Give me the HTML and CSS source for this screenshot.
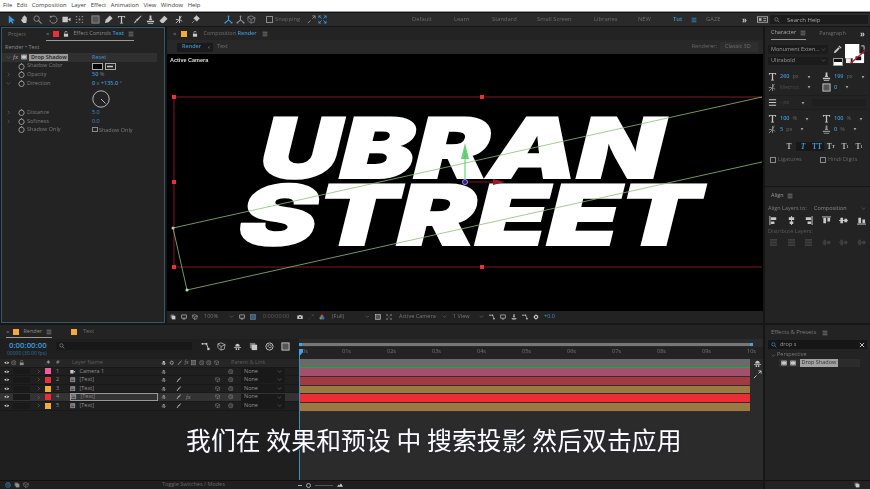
FILE: index.html
```html
<!DOCTYPE html>
<html lang="en">

<head>
    <meta charset="UTF-8">
    <title>After Effects - Urban Street</title>
    <link rel="stylesheet" href="styles.css">
</head>

<body>
    <svg class="sprite" width="0" height="0">
        <symbol id="i-arrow" viewBox="0 0 10 10"><path d="M2 0.5v9l2.4-2.3 1.6 2.6 1.3-.8-1.5-2.6 3-.3z" fill="currentColor"/></symbol>
        <symbol id="i-hand" viewBox="0 0 10 10"><path d="M2.5 5V2.5h1V1.5h1v-1h1v1h1v1h1v3l-.6 3.5H3.6L1 5.5l.8-.8z" fill="currentColor"/></symbol>
        <symbol id="i-zoom" viewBox="0 0 10 10"><circle cx="4" cy="4" r="3" fill="none" stroke="currentColor"/><path d="M6.2 6.2L9.5 9.5" stroke="currentColor" stroke-width="1.2"/></symbol>
        <symbol id="i-rotate" viewBox="0 0 10 10"><path d="M2 2.5A4 4 0 1 1 1 5.5" fill="none" stroke="currentColor"/><path d="M.5 .8L3.5 1 2 3.6z" fill="currentColor"/></symbol>
        <symbol id="i-camera" viewBox="0 0 10 10"><path d="M.5 2h6v6h-6zM7 4.5L9.5 3v4L7 5.5z" fill="currentColor"/></symbol>
        <symbol id="i-pan" viewBox="0 0 10 10"><path d="M1 1h1.500v1.500H1zM7.500 1H9v1.500H7.500zM1 7.500h1.500V9H1zM7.500 7.500H9V9H7.500zM4 4h2v2H4zM4.500 1h1v1h-1zM4.500 8h1v1h-1zM1 4.500h1v1H1zM8 4.500h1v1H8z" fill="currentColor"/></symbol>
        <symbol id="i-rect" viewBox="0 0 10 10"><rect x="1" y="1" width="8" height="8" fill="#555" stroke="currentColor"/></symbol>
        <symbol id="i-pen" viewBox="0 0 10 10"><path d="M6.500 .5L9.500 3.500 5 8 1 9l1-4z" fill="currentColor"/></symbol>
        <symbol id="i-type" viewBox="0 0 10 10"><path d="M1 1h8v2H8V2H5.700v6.500h1v1H3.300v-1h1V2H2v1H1z" fill="currentColor"/></symbol>
        <symbol id="i-brush" viewBox="0 0 10 10"><path d="M9 .5l.5.5L4.500 7 3 5.500zM2.500 6L4 7.500 1 9.500z" fill="currentColor"/></symbol>
        <symbol id="i-stamp" viewBox="0 0 10 10"><path d="M4 .5h2v3.500l1 1.500H3L4 4zM1 6.500h8v1.500H1zM2 9h6v.8H2z" fill="currentColor"/></symbol>
        <symbol id="i-eraser" viewBox="0 0 10 10"><path d="M6 .8L9.500 4.300 5 9H3L.5 6.300z" fill="currentColor"/></symbol>
        <symbol id="i-roto" viewBox="0 0 10 10"><path d="M1 9L5 5M5 1v8M1 5h3M7 1L5 5l3 2" fill="none" stroke="currentColor"/></symbol>
        <symbol id="i-pin" viewBox="0 0 10 10"><path d="M6 .5L9.500 4 8.300 4.700 6.500 7 3 3.500 5.300 1.700zM3.800 6.200L1 9" fill="currentColor" stroke="currentColor" stroke-width=".6"/></symbol>
        <symbol id="i-axis" viewBox="0 0 10 10"><path d="M5 1v4.500L1.500 8.500M5 5.500l3.500 3" fill="none" stroke="currentColor" stroke-width="1.200"/><circle cx="5" cy="1.500" r="1" fill="currentColor"/><circle cx="1.500" cy="8.500" r="1" fill="currentColor"/><circle cx="8.500" cy="8.500" r="1" fill="currentColor"/></symbol>
        <symbol id="i-box3d" viewBox="0 0 10 10"><path d="M1 2l3.500-1 4.500 2-1 5-4 1-3-3zM4.500 5L9 3M4.500 5L1 2M4.500 5v4" fill="none" stroke="currentColor" stroke-width=".8"/></symbol>
        <symbol id="i-snap" viewBox="0 0 10 10"><path d="M1 9l3-3M6 1h3v3M9 1L6 4" fill="none" stroke="currentColor"/></symbol>
        <symbol id="i-grid" viewBox="0 0 10 10"><path d="M1 1l3 3M9 1L6 4M1 9l3-3M9 9L6 6M3.500 1H1v2.500M6.500 1H9v2.500M3.500 9H1V6.500M6.500 9H9V6.500" fill="none" stroke="currentColor" stroke-width=".9"/></symbol>
        <symbol id="i-stopwatch" viewBox="0 0 10 10"><circle cx="5" cy="5.500" r="3.800" fill="none" stroke="currentColor" stroke-width="1.100"/><path d="M4 .5h2" stroke="currentColor" stroke-width="1.100"/></symbol>
        <symbol id="i-twirl" viewBox="0 0 10 10"><path d="M3.500 1.500L7 5 3.500 8.500" fill="none" stroke="currentColor"/></symbol>
        <symbol id="i-down" viewBox="0 0 10 10"><path d="M1.500 3L5 6.800 8.500 3" fill="none" stroke="currentColor"/></symbol>
        <symbol id="i-tri" viewBox="0 0 10 10"><path d="M1.500 2.500h7L5 8.500z" fill="currentColor"/></symbol>
        <symbol id="i-menu" viewBox="0 0 10 10"><path d="M1 2h8M1 5h8M1 8h8" stroke="currentColor" stroke-width="1.200"/></symbol>
        <symbol id="i-lock" viewBox="0 0 10 10"><path d="M1.500 4.500h7v5h-7z" fill="currentColor"/><path d="M3 4.500V2.500a2 2 0 0 1 4 0" fill="none" stroke="currentColor" stroke-width="1.100"/></symbol>
        <symbol id="i-eye" viewBox="0 0 10 10"><path d="M.5 5C2 2.500 8 2.500 9.500 5 8 7.500 2 7.500.5 5z" fill="currentColor"/><circle cx="5" cy="5" r="1.300" fill="#222"/></symbol>
        <symbol id="i-shy" viewBox="0 0 10 10"><path d="M2.500 5C2.500 1 7.500 1 7.500 5zM1 5.500h8v1H1zM3 7h1.500v2H3zM5.500 7H7v2H5.500z" fill="currentColor"/></symbol>
        <symbol id="i-swirl" viewBox="0 0 10 10"><circle cx="5" cy="5" r="4" fill="none" stroke="currentColor"/><path d="M3 5a2 2 0 0 1 4 0 1.500 1.500 0 0 1-3 0" fill="none" stroke="currentColor" stroke-width=".8"/></symbol>
        <symbol id="i-layer" viewBox="0 0 10 10"><rect x=".5" y=".5" width="9" height="9" fill="#9a9a9a"/><rect x="2" y="2" width="3" height="3" fill="#c24a4a"/><rect x="5" y="2" width="3" height="3" fill="#4a7ec2"/><rect x="2" y="5" width="6" height="3" fill="#4f4f58"/></symbol>
        <symbol id="i-film" viewBox="0 0 10 10"><path d="M.5 1h9v8h-9z" fill="currentColor"/><path d="M2 2.500h1M4.500 2.500h1M7 2.500h1M2 7.500h1M4.500 7.500h1M7 7.500h1" stroke="#222"/></symbol>
        <symbol id="i-search" viewBox="0 0 10 10"><circle cx="4" cy="4" r="2.800" fill="none" stroke="currentColor"/><path d="M6 6l3 3" stroke="currentColor" stroke-width="1.100"/></symbol>
        <symbol id="i-close" viewBox="0 0 10 10"><path d="M1.500 1.500l7 7M8.500 1.500l-7 7" stroke="currentColor" stroke-width="1.600"/></symbol>
        <symbol id="i-dropper" viewBox="0 0 10 10"><path d="M1 9l.5-2L6 2.500 7.500 4 3 8.500zM6 1.500l1-1 2.500 2.500-1 1z" fill="currentColor"/></symbol>
        <symbol id="i-screen" viewBox="0 0 10 10"><path d="M1 1.500h8v5.500H1zM3 8.500h4" fill="none" stroke="currentColor" stroke-width="1.100"/></symbol>
        <symbol id="i-cam-still" viewBox="0 0 10 10"><path d="M.5 2.500h2.500L4 1.500h2l1 1h2.500v6H.5z" fill="currentColor"/><circle cx="5" cy="5.500" r="1.500" fill="#222"/></symbol>
        <symbol id="i-rgb" viewBox="0 0 10 10"><circle cx="5" cy="3.200" r="2.500" fill="#e23b3b"/><circle cx="3.200" cy="6.500" r="2.500" fill="#3bb04a"/><circle cx="6.800" cy="6.500" r="2.500" fill="#3b62e2"/></symbol>
        <symbol id="i-gear" viewBox="0 0 10 10"><circle cx="5" cy="5" r="2.700" fill="none" stroke="currentColor" stroke-width="1.800"/><path d="M5 .5v2M5 7.500v2M.5 5h2M7.500 5h2" stroke="currentColor"/></symbol>
        <symbol id="i-flow" viewBox="0 0 10 10"><path d="M1 2h5M6 2l2 5" stroke="currentColor"/><circle cx="1.500" cy="2" r="1" fill="currentColor"/><rect x="5" y="1" width="2" height="2" fill="currentColor"/><rect x="7" y="6.500" width="2.500" height="2.500" fill="currentColor"/></symbol>
        <symbol id="i-tile" viewBox="0 0 10 10"><path d="M1 1h6v6H1z" fill="#777"/><path d="M3 3h6v6H3z" fill="currentColor"/></symbol>
        <symbol id="i-align-l" viewBox="0 0 10 10"><path d="M1 0v10" stroke="currentColor"/><path d="M2 1.500h6v3H2zM2 6h4v3H2z" fill="currentColor"/></symbol>
        <symbol id="i-align-c" viewBox="0 0 10 10"><path d="M5 0v10" stroke="currentColor"/><path d="M2 1.500h6v3H2zM3 6h4v3H3z" fill="currentColor"/></symbol>
        <symbol id="i-align-r" viewBox="0 0 10 10"><path d="M9 0v10" stroke="currentColor"/><path d="M2 1.500h6v3H2zM4 6h4v3H4z" fill="currentColor"/></symbol>
        <symbol id="i-align-t" viewBox="0 0 10 10"><path d="M0 1h10" stroke="currentColor"/><path d="M1.500 2h3v6h-3zM6 2h3v4H6z" fill="currentColor"/></symbol>
        <symbol id="i-align-m" viewBox="0 0 10 10"><path d="M0 5h10" stroke="currentColor"/><path d="M1.500 2h3v6h-3zM6 3h3v4H6z" fill="currentColor"/></symbol>
        <symbol id="i-align-b" viewBox="0 0 10 10"><path d="M0 9h10" stroke="currentColor"/><path d="M1.500 2h3v6h-3zM6 4h3v4H6z" fill="currentColor"/></symbol>
        <symbol id="i-bars" viewBox="0 0 10 10"><path d="M1 1h8v2H1zM1 4h8v2H1zM1 7h8v2H1z" fill="currentColor"/></symbol>
        <symbol id="i-mountain" viewBox="0 0 10 10"><path d="M0 8l3-4 1.500 2L6.500 2 10 8z" fill="currentColor"/></symbol>
    </svg>

    <div class="app">
        <nav class="menubar">
            <span>File</span><span>Edit</span><span>Composition</span><span>Layer</span><span>Effect</span><span>Animation</span><span>View</span><span>Window</span><span>Help</span>
        </nav>

        <div class="toolbar">
            <div class="tools">
                <svg class="ic ic-blue"><use href="#i-arrow"/></svg>
                <svg class="ic ic-light"><use href="#i-hand"/></svg>
                <svg class="ic"><use href="#i-zoom"/></svg>
                <svg class="ic group"><use href="#i-rotate"/></svg>
                <svg class="ic ic-light"><use href="#i-camera"/></svg>
                <svg class="ic"><use href="#i-pan"/></svg>
                <svg class="ic group"><use href="#i-rect"/></svg>
                <svg class="ic ic-light"><use href="#i-pen"/></svg>
                <svg class="ic ic-light"><use href="#i-type"/></svg>
                <svg class="ic ic-light group"><use href="#i-brush"/></svg>
                <svg class="ic ic-light"><use href="#i-stamp"/></svg>
                <svg class="ic ic-light"><use href="#i-eraser"/></svg>
                <svg class="ic ic-light group"><use href="#i-roto"/></svg>
                <svg class="ic ic-light group"><use href="#i-pin"/></svg>
            </div>
            <div class="axis-tools">
                <svg class="ic ic-blue"><use href="#i-axis"/></svg>
                <svg class="ic"><use href="#i-axis"/></svg>
                <svg class="ic"><use href="#i-box3d"/></svg>
                <span class="check snapbox"></span><span class="snap-label">Snapping</span>
                <svg class="ic"><use href="#i-snap"/></svg>
                <svg class="ic ic-blue"><use href="#i-grid"/></svg>
            </div>
            <div class="workspaces">
                <span class="ws-default">Default</span><span class="ws-learn">Learn</span><span class="ws-standard">Standard</span><span class="ws-small">Small Screen</span><span class="ws-lib">Libraries</span><span class="ws-new">NEW</span><span class="ws-tut">Tut</span>
                <svg class="ic-mini ic-blue"><use href="#i-menu"/></svg>
                <span class="ws-gaze">GAZE</span>
                <span class="more">»</span>
                <svg class="sync" viewBox="0 0 12 7"><rect x=".5" y=".5" width="11" height="6" fill="none" stroke="#aaa"/><rect x="2" y="2" width="3" height="3" fill="#aaa"/><path d="M7 2.500h3M7 4.500h3" stroke="#aaa"/></svg>
            </div>
            <div class="searchhelp">
                <svg class="ic-mini"><use href="#i-search"/></svg>
                <span>Search Help</span>
            </div>
        </div>

        <main class="workspace">
            <section class="panel fx-controls">
                <header class="tabs">
                    <span class="tab-dim tab-project">Project</span>
                    <span class="active-tab">
                        <span class="x">×</span><i class="chip chip-red"></i>
                        <svg class="ic-mini ic-light"><use href="#i-lock"/></svg>
                        <span>Effect Controls <b class="blue">Text</b></span>
                        <svg class="ic-mini"><use href="#i-menu"/></svg>
                    </span>
                </header>
                <div class="fx-crumb">Render • Text</div>
                <div class="fx-row fx-title">
                    <svg class="tw"><use href="#i-down"/></svg>
                    <em class="fx-mark">fx</em>
                    <svg class="ic-mini ic-light"><use href="#i-film"/></svg>
                    <span class="fx-name">Drop Shadow</span>
                    <span class="blue fx-val">Reset</span>
                </div>
                <div class="fx-row">
                    <span class="tw"></span>
                    <svg class="watch"><use href="#i-stopwatch"/></svg>
                    <span class="fx-label">Shadow Color</span>
                    <span class="fx-val swatches"><i class="swatch-black"></i><svg class="swatch-drop" viewBox="0 0 11 7"><rect x=".5" y=".5" width="10" height="6" fill="none" stroke="#aaa"/><path d="M2 3.500h6" stroke="#ccc" stroke-width="1.500"/></svg></span>
                </div>
                <div class="fx-row">
                    <svg class="tw"><use href="#i-twirl"/></svg>
                    <svg class="watch"><use href="#i-stopwatch"/></svg>
                    <span class="fx-label">Opacity</span>
                    <span class="fx-val"><b class="blue">50</b> %</span>
                </div>
                <div class="fx-row">
                    <svg class="tw"><use href="#i-down"/></svg>
                    <svg class="watch"><use href="#i-stopwatch"/></svg>
                    <span class="fx-label">Direction</span>
                    <span class="fx-val"><b class="blue">0</b> x <b class="blue">+135.0</b> °</span>
                </div>
                <div class="dial-wrap">
                    <svg class="dial" viewBox="0 0 18 18"><circle cx="9" cy="9" r="8.200" fill="none" stroke="#b5b5b5"/><path d="M9 9l4.500 4.500" stroke="#b5b5b5"/></svg>
                </div>
                <div class="fx-row">
                    <svg class="tw"><use href="#i-twirl"/></svg>
                    <svg class="watch"><use href="#i-stopwatch"/></svg>
                    <span class="fx-label">Distance</span>
                    <span class="fx-val blue">5.0</span>
                </div>
                <div class="fx-row">
                    <svg class="tw"><use href="#i-twirl"/></svg>
                    <svg class="watch"><use href="#i-stopwatch"/></svg>
                    <span class="fx-label">Softness</span>
                    <span class="fx-val blue">0.0</span>
                </div>
                <div class="fx-row">
                    <span class="tw"></span>
                    <svg class="watch"><use href="#i-stopwatch"/></svg>
                    <span class="fx-label">Shadow Only</span>
                    <span class="fx-val"><i class="check"></i> Shadow Only</span>
                </div>
            </section>

            <section class="panel comp">
                <header class="tabs comp-tabs">
                    <span class="x">×</span><i class="chip chip-orange"></i>
                    <svg class="ic-mini ic-light"><use href="#i-lock"/></svg>
                    <span class="tab-dim">Composition <b class="blue">Render</b></span>
                    <svg class="ic-mini"><use href="#i-menu"/></svg>
                </header>
                <div class="comp-sub">
                    <span class="pill"><b class="blue">Render</b><b class="blue pill-arrow">‹</b></span>
                    <span class="tab-dim">Text</span>
                    <span class="renderer">Renderer:</span>
                    <span class="renderer-box">Classic 3D</span>
                </div>
                <div class="viewer">
                    <div class="viewer-label">Active Camera</div>
                    <div class="title-art">
                        <div class="line-1">UBRAN</div>
                        <div class="line-2">STREET</div>
                    </div>
                    <svg class="overlay" viewBox="0 0 595 257">
                        <path d="M7 43H595M7 213H595M7 43V213" fill="none" stroke="#7d1c26"/>
                        <g fill="#ea2f3c">
                            <rect x="5" y="41" width="4" height="4"/><rect x="313" y="41" width="4" height="4"/><rect x="5" y="126" width="4" height="4"/><rect x="5" y="211" width="4" height="4"/><rect x="313" y="211" width="4" height="4"/>
                        </g>
                        <path d="M6 174L595 43M6 174L20 236L595 108" fill="none" stroke="#8bbd7c" stroke-width=".8"/>
                        <circle cx="6" cy="174" r="1.500" fill="#a8d890"/><circle cx="20" cy="236" r="1.600" fill="#a8e890"/>
                        <path d="M298 128V96" stroke="#4fcf5a"/>
                        <path d="M298 89L302 105H294z" fill="#56c864" opacity=".85"/>
                        <path d="M298 128H330" stroke="#8a1020"/>
                        <path d="M338 128L326 125V131z" fill="#a3162a"/>
                        <circle cx="298" cy="128" r="2.500" fill="#2a1a8a" stroke="#a98ae8"/>
                    </svg>
                </div>
                <div class="viewer-bar">
                    <svg class="ic-mini ic-light"><use href="#i-tile"/></svg>
                    <svg class="ic-mini ic-light"><use href="#i-screen"/></svg>
                    <svg class="ic-mini ic-light"><use href="#i-box3d"/></svg>
                    <span class="vb-zoom">100%</span><svg class="tw"><use href="#i-down"/></svg>
                    <svg class="ic-mini ic-light"><use href="#i-screen"/></svg>
                    <svg class="ic-mini ic-blue"><use href="#i-rect"/></svg>
                    <span class="vb-time">0:00:00:00</span>
                    <svg class="ic-mini ic-light"><use href="#i-cam-still"/></svg>
                    <svg class="ic-mini ic-dim"><use href="#i-snap"/></svg>
                    <svg class="ic-mini"><use href="#i-rgb"/></svg>
                    <span class="vb-full">(Full)</span><svg class="tw"><use href="#i-down"/></svg>
                    <svg class="ic-mini ic-light"><use href="#i-rect"/></svg>
                    <svg class="ic-mini"><use href="#i-grid"/></svg>
                    <span class="vb-cam">Active Camera</span><svg class="tw"><use href="#i-down"/></svg>
                    <span class="vb-view">1 View</span><svg class="tw"><use href="#i-down"/></svg>
                    <svg class="ic-mini ic-light"><use href="#i-flow"/></svg>
                    <svg class="ic-mini ic-light"><use href="#i-screen"/></svg>
                    <svg class="ic-mini ic-light"><use href="#i-stamp"/></svg>
                    <svg class="ic-mini ic-light"><use href="#i-flow"/></svg>
                    <svg class="ic-mini ic-light"><use href="#i-gear"/></svg>
                    <span class="blue">+0.0</span>
                </div>
            </section>

            <aside class="side-top">
                <section class="panel character">
                    <header class="side-tabs">
                        <span class="underlined">Character <svg class="ic-mini"><use href="#i-menu"/></svg></span>
                        <span class="tab-dim para">Paragraph</span>
                        <span class="more">»</span>
                    </header>
                    <div class="font-block">
                        <div class="font-selects">
                            <div class="select">Monument Exten...<svg class="tw"><use href="#i-down"/></svg></div>
                            <div class="select">Ultrabold<svg class="tw"><use href="#i-down"/></svg></div>
                        </div>
                        <div class="small-swatches">
                            <svg class="ic ic-light"><use href="#i-dropper"/></svg>
                            <i class="bw-swatch"></i>
                        </div>
                        <svg class="color-swatch" viewBox="0 0 22 21">
                            <rect x="0" y="0" width="15" height="15" fill="#fff"/>
                            <rect x="1" y="15" width="5" height="5" fill="#eee"/>
                            <rect x="8" y="10" width="12" height="10" fill="#fff"/>
                            <rect x="11" y="13" width="6" height="4" fill="#111"/>
                            <path d="M5 21L21 7" stroke="#c2142c" stroke-width="1.300"/>
                            <path d="M17 2h3v4" fill="none" stroke="#ccc"/>
                        </svg>
                    </div>
                    <div class="char-grid">
                        <span class="cg"><svg class="ic ic-light"><use href="#i-type"/></svg><b class="blue">260</b> px <svg class="tw-tri"><use href="#i-tri"/></svg></span>
                        <span class="cg"><svg class="ic ic-light"><use href="#i-stamp"/></svg><b class="blue">199</b> px <svg class="tw-tri"><use href="#i-tri"/></svg></span>
                        <span class="cg"><svg class="ic"><use href="#i-roto"/></svg><span class="ic-dim">Metrics</span> <svg class="tw-tri"><use href="#i-tri"/></svg></span>
                        <span class="cg"><svg class="ic ic-light"><use href="#i-rect"/></svg><b class="blue">0</b> <svg class="tw-tri"><use href="#i-tri"/></svg></span>
                    </div>
                    <div class="stroke-row">
                        <svg class="ic ic-light"><use href="#i-menu"/></svg><span class="ic-dim">- px</span><svg class="tw-tri"><use href="#i-tri"/></svg>
                        <span class="stroke-select"></span>
                    </div>
                    <div class="char-grid scale-grid">
                        <span class="cg"><svg class="ic ic-light"><use href="#i-type"/></svg><b class="blue">100</b> % <svg class="tw-tri"><use href="#i-tri"/></svg></span>
                        <span class="cg"><svg class="ic ic-light"><use href="#i-type"/></svg><b class="blue">100</b> % <svg class="tw-tri"><use href="#i-tri"/></svg></span>
                        <span class="cg"><svg class="ic"><use href="#i-roto"/></svg><b class="blue">5</b> px <svg class="tw-tri"><use href="#i-tri"/></svg></span>
                        <span class="cg"><svg class="ic"><use href="#i-stamp"/></svg><b class="blue">0</b> % <svg class="tw-tri"><use href="#i-tri"/></svg></span>
                    </div>
                    <div class="type-styles">
                        <span>T</span><span class="on"><em>T</em></span><span class="on">TT</span><span>T<small>T</small></span><span>T<sup>1</sup></span><span>T<sub>1</sub></span>
                    </div>
                    <div class="char-checks">
                        <span><i class="check"></i>Ligatures</span>
                        <span><i class="check"></i>Hindi Digits</span>
                    </div>
                </section>
                <section class="panel align">
                    <header class="align-title">Align <svg class="ic-mini"><use href="#i-menu"/></svg></header>
                    <div class="align-to"><span>Align Layers to:</span><span class="align-select">Composition<svg class="tw"><use href="#i-down"/></svg></span></div>
                    <div class="align-icons">
                        <svg class="ic ic-light"><use href="#i-align-l"/></svg><svg class="ic ic-light"><use href="#i-align-c"/></svg><svg class="ic ic-light"><use href="#i-align-r"/></svg><svg class="ic ic-light"><use href="#i-align-t"/></svg><svg class="ic ic-light"><use href="#i-align-m"/></svg><svg class="ic ic-light"><use href="#i-align-b"/></svg>
                    </div>
                    <div class="align-dist">Distribute Layers:</div>
                    <div class="align-icons faint">
                        <svg class="ic"><use href="#i-bars"/></svg><svg class="ic"><use href="#i-bars"/></svg><svg class="ic"><use href="#i-bars"/></svg><svg class="ic"><use href="#i-align-m"/></svg><svg class="ic"><use href="#i-align-m"/></svg><svg class="ic"><use href="#i-align-m"/></svg>
                    </div>
                </section>
            </aside>

            <section class="panel timeline">
                <header class="tl-tabs">
                    <span class="active-tab">
                        <span class="x">×</span><i class="chip chip-orange"></i><span>Render</span>
                        <svg class="ic-mini"><use href="#i-menu"/></svg>
                    </span>
                    <i class="chip chip-orange chip-second"></i><span class="tab-dim">Text</span>
                </header>
                <div class="tl-body">
                    <div class="tl-left">
                        <div class="tl-controls">
                            <div class="tl-time">
                                <div class="timecode">0:00:00:00</div>
                                <div class="fps">00000 (30.00 fps)</div>
                            </div>
                            <div class="tl-search"><svg class="ic-mini"><use href="#i-search"/></svg></div>
                            <div class="tl-tools">
                                <svg class="ic ic-light"><use href="#i-flow"/></svg><svg class="ic ic-light"><use href="#i-box3d"/></svg><svg class="ic ic-light"><use href="#i-shy"/></svg><svg class="ic ic-light"><use href="#i-tile"/></svg><svg class="ic ic-light"><use href="#i-swirl"/></svg><svg class="ic ic-light"><use href="#i-rect"/></svg>
                            </div>
                        </div>
                        <div class="layer-row layer-head">
                            <svg class="ic-mini ic-light"><use href="#i-eye"/></svg>
                            <span class="solo-head"><svg class="ic-mini"><use href="#i-swirl"/></svg><svg class="ic-mini"><use href="#i-lock"/></svg></span>
                            <span></span>
                            <svg class="ic-mini"><use href="#i-pin"/></svg>
                            <span class="num">#</span>
                            <span class="name dim">Layer Name</span>
                            <svg class="ic-mini ic-light"><use href="#i-shy"/></svg>
                            <span class="sw-head">
                                <svg class="ic-mini"><use href="#i-gear"/></svg><svg class="ic-mini"><use href="#i-brush"/></svg><em>fx</em><svg class="ic-mini"><use href="#i-rect"/></svg><svg class="ic-mini"><use href="#i-swirl"/></svg><svg class="ic-mini"><use href="#i-swirl"/></svg><svg class="ic-mini"><use href="#i-box3d"/></svg>
                            </span>
                            <span class="parent dim">Parent &amp; Link</span>
                        </div>
                        <div class="layer-row">
                            <svg class="ic-mini ic-light"><use href="#i-eye"/></svg><span class="cells"></span>
                            <svg class="tw"><use href="#i-twirl"/></svg><i class="chip chip-pink"></i><span class="num">1</span>
                            <span class="name"><svg class="ic-mini ic-light"><use href="#i-camera"/></svg>Camera 1</span>
                            <svg class="ic-mini"><use href="#i-shy"/></svg>
                            <span class="sw"></span><span class="sw"></span><span class="sw"></span>
                            <svg class="ic-mini"><use href="#i-swirl"/></svg>
                            <span class="none">None<svg class="tw"><use href="#i-down"/></svg></span>
                        </div>
                        <div class="layer-row">
                            <svg class="ic-mini ic-light"><use href="#i-eye"/></svg><span class="cells"></span>
                            <svg class="tw"><use href="#i-twirl"/></svg><i class="chip chip-red"></i><span class="num">2</span>
                            <span class="name"><svg class="ic-mini"><use href="#i-layer"/></svg>[Text]</span>
                            <svg class="ic-mini"><use href="#i-shy"/></svg>
                            <span class="sw"><svg class="ic-mini ic-light"><use href="#i-brush"/></svg></span><span class="sw"></span><span class="sw sw-3d"><svg class="ic-mini"><use href="#i-box3d"/></svg></span>
                            <svg class="ic-mini"><use href="#i-swirl"/></svg>
                            <span class="none">None<svg class="tw"><use href="#i-down"/></svg></span>
                        </div>
                        <div class="layer-row">
                            <svg class="ic-mini ic-light"><use href="#i-eye"/></svg><span class="cells"></span>
                            <svg class="tw"><use href="#i-twirl"/></svg><i class="chip chip-orange"></i><span class="num">3</span>
                            <span class="name"><svg class="ic-mini"><use href="#i-layer"/></svg>[Text]</span>
                            <svg class="ic-mini"><use href="#i-shy"/></svg>
                            <span class="sw"><svg class="ic-mini ic-light"><use href="#i-brush"/></svg></span><span class="sw"></span><span class="sw sw-3d"><svg class="ic-mini"><use href="#i-box3d"/></svg></span>
                            <svg class="ic-mini"><use href="#i-swirl"/></svg>
                            <span class="none">None<svg class="tw"><use href="#i-down"/></svg></span>
                        </div>
                        <div class="layer-row selected">
                            <svg class="ic-mini ic-light"><use href="#i-eye"/></svg><span class="cells"></span>
                            <svg class="tw"><use href="#i-twirl"/></svg><i class="chip chip-red"></i><span class="num">4</span>
                            <span class="name name-edit"><svg class="ic-mini"><use href="#i-layer"/></svg>[Text]</span>
                            <svg class="ic-mini"><use href="#i-shy"/></svg>
                            <span class="sw"><svg class="ic-mini ic-light"><use href="#i-brush"/></svg></span><span class="sw fx-sw"><em>fx</em></span><span class="sw sw-3d"><svg class="ic-mini"><use href="#i-box3d"/></svg></span>
                            <svg class="ic-mini"><use href="#i-swirl"/></svg>
                            <span class="none">None<svg class="tw"><use href="#i-down"/></svg></span>
                        </div>
                        <div class="layer-row">
                            <svg class="ic-mini ic-light"><use href="#i-eye"/></svg><span class="cells"></span>
                            <svg class="tw"><use href="#i-twirl"/></svg><i class="chip chip-orange"></i><span class="num">5</span>
                            <span class="name"><svg class="ic-mini"><use href="#i-layer"/></svg>[Text]</span>
                            <svg class="ic-mini"><use href="#i-shy"/></svg>
                            <span class="sw"><svg class="ic-mini ic-light"><use href="#i-brush"/></svg></span><span class="sw"></span><span class="sw sw-3d"><svg class="ic-mini"><use href="#i-box3d"/></svg></span>
                            <svg class="ic-mini"><use href="#i-swirl"/></svg>
                            <span class="none">None<svg class="tw"><use href="#i-down"/></svg></span>
                        </div>
                    </div>
                    <div class="tl-right">
                        <div class="nav-bar"></div>
                        <div class="ruler">
                            <span>0s</span><span>01s</span><span>02s</span><span>03s</span><span>04s</span><span>05s</span><span>06s</span><span>07s</span><span>08s</span><span>09s</span><span>10s</span>
                        </div>
                        <div class="work-area"></div>
                        <div class="tracks">
                            <div class="track track-pink"></div>
                            <div class="track track-red"></div>
                            <div class="track track-tan"></div>
                            <div class="track track-hot"></div>
                            <div class="track track-tan"></div>
                        </div>
                        <div class="playhead"></div>
                        <svg class="head-cap" viewBox="0 0 7 7"><path d="M0 0h7v3L3.500 7 0 3z" fill="#3ba8ee"/></svg>
                        <div class="side-marks">
                            <svg class="ic ic-light"><use href="#i-shy"/></svg>
                            <svg class="ic ic-light"><use href="#i-snap"/></svg>
                        </div>
                    </div>
                </div>
                <footer class="tl-foot">
                    <span class="foot-icons"><svg class="ic-mini ic-blue"><use href="#i-swirl"/></svg><svg class="ic-mini"><use href="#i-tile"/></svg><svg class="ic-mini"><use href="#i-box3d"/></svg></span>
                    <span class="toggle">Toggle Switches / Modes</span>
                    <span class="foot-zoom"><i class="zoom-min"></i><i class="zoom-knob"></i><i class="zoom-line"></i><svg class="ic-mini ic-light"><use href="#i-mountain"/></svg></span>
                </footer>
            </section>

            <section class="panel presets">
                <header class="preset-title">Effects &amp; Presets <svg class="ic-mini"><use href="#i-menu"/></svg></header>
                <div class="preset-search"><svg class="ic-mini ic-blue"><use href="#i-search"/></svg><span>drop s</span><svg class="ic-mini ic-light close"><use href="#i-close"/></svg></div>
                <div class="preset-folder"><svg class="tw"><use href="#i-down"/></svg>Perspective</div>
                <div class="preset-item">
                    <svg class="ic-mini ic-light"><use href="#i-film"/></svg>
                    <svg class="ic-mini ic-light"><use href="#i-film"/></svg>
                    <span class="preset-hit">Drop Shadow</span>
                </div>
                <footer class="preset-foot"><svg class="ic-mini ic-light"><use href="#i-tile"/></svg></footer>
            </section>
        </main>
    </div>

    <div class="subtitle">我们在 效果和预设 中 搜索投影 然后双击应用</div>
</body>

</html>
```

FILE: styles.css
```css
* {
    box-sizing: border-box;
}

html,
body {
    margin: 0;
    height: 100%;
}

body {
    width: 870px;
    height: 489px;
    overflow: hidden;
    position: relative;
    background-color: #161616;
    color: #8b8b8b;
    font-family: "Open Sans", "Liberation Sans", sans-serif;
    font-size: 5.5px;
    line-height: 1;
    white-space: nowrap;
}

.sprite {
    position: absolute;
}

svg {
    display: block;
    flex: none;
}

i {
    display: block;
    flex: none;
}

b {
    font-weight: 600;
}

.app {
    display: flex;
    flex-direction: column;
    height: 489px;
    filter: blur(0.3px);
}

.blue {
    color: #3f95cf;
}

/* icon sizes */
.ic {
    width: 9px;
    height: 9px;
    color: #8f8f8f;
}

.ic-mini {
    width: 6px;
    height: 6px;
    color: #8f8f8f;
}

.ic-light {
    color: #c8c8c8;
}

.ic-blue {
    color: #3b9ae1;
}

.ic-dim {
    color: #4c4c4c;
}

.tw {
    width: 5px;
    height: 5px;
    color: #777;
}

.tw-tri {
    display: inline-block;
    width: 4px;
    height: 4px;
    color: #a0a0a0;
}

.chip {
    width: 6px;
    height: 6px;
}

.chip-red {
    background-color: #ec2d3a;
}

.chip-orange {
    background-color: #f2ab3b;
}

.chip-pink {
    background-color: #e9609a;
}

.check {
    width: 5.500px;
    height: 5.500px;
    border: 1px solid #8a8a8a;
    display: inline-block;
    vertical-align: -1px;
}

.x {
    color: #888;
    font-size: 6px;
}

.more {
    color: #ccc;
    font-size: 8px;
    font-weight: 700;
}

.tab-dim {
    color: #6f6f6f;
}

/* top menu */
.menubar {
    height: 12px;
    flex: none;
    display: flex;
    align-items: center;
    gap: 4.500px;
    padding-left: 3px;
    background-color: #fff;
    color: #3a3a3a;
    font-size: 5.900px;
    border-bottom: 1px solid #9a9a9a;
}

.toolbar {
    height: 14px;
    flex: none;
    display: flex;
    align-items: center;
    background-color: #2a2a2a;
    border-top: 1px solid #111;
    position: relative;
}

.tools {
    display: flex;
    align-items: center;
    gap: 4px;
    padding-left: 7px;
    width: 224px;
}

.tools .group {
    margin-left: 3px;
}

.axis-tools {
    display: flex;
    align-items: center;
    gap: 2.500px;
    width: 188px;
    color: #666;
}

.snapbox {
    margin-left: 7px;
    width: 7px;
    height: 7px;
}

.snap-label {
    font-size: 5.800px;
    width: 29px;
}

.workspaces {
    display: flex;
    align-items: center;
    width: 358px;
    font-size: 5.800px;
    color: #6b6b6b;
}

.ws-default {
    width: 42px;
}

.ws-learn {
    width: 38px;
}

.ws-standard {
    width: 45px;
}

.ws-small {
    width: 57px;
}

.ws-lib {
    width: 44px;
}

.ws-new {
    width: 35px;
}

.ws-tut {
    width: 18px;
    color: #3f95cf;
    font-weight: 600;
}

.ws-gaze {
    margin-left: 9px;
    width: 36px;
}

.sync {
    width: 11px;
    height: 7px;
    margin-left: 10px;
}

.searchhelp {
    width: 98px;
    height: 9px;
    display: flex;
    align-items: center;
    gap: 7px;
    padding-left: 4px;
    background-color: #1c1c1c;
    color: #a8a8a8;
    font-size: 6px;
}

/* main layout */
.workspace {
    flex: 1;
    display: grid;
    grid-template-columns: 165px 596px 105px;
    grid-template-rows: 296px 1fr;
    gap: 2px 2px;
    padding: 1px 0 0 0;
    min-height: 0;
}

.panel {
    background-color: #232323;
    min-width: 0;
    min-height: 0;
}

.tabs {
    height: 13px;
    display: flex;
    align-items: center;
}

.active-tab {
    display: inline-flex;
    align-items: center;
    gap: 4px;
    height: 12px;
    border-bottom: 1.500px solid #9a9a9a;
}

/* effect controls */
.fx-controls {
    border: 1px solid #37586b;
    margin-left: 1px;
}

.tab-project {
    width: 44px;
    padding-left: 6px;
    flex: none;
}

.fx-controls .tabs {
    padding-left: 0;
}

.fx-crumb {
    padding: 3px 0 2px 3px;
    height: 12px;
    display: flex;
    align-items: center;
    color: #8a8a8a;
}

.fx-row {
    height: 8.700px;
    display: flex;
    align-items: center;
    padding-left: 4px;
    gap: 2px;
}

.fx-title {
    width: 155px;
    background-color: #303030;
}

.fx-mark {
    font-family: "Liberation Serif", serif;
    font-size: 7px;
    color: #aaa;
    margin-right: 1px;
}

.fx-name {
    background-color: #9a9a9a;
    color: #222;
    font-weight: 600;
    padding: 1px 2px;
    width: 39px;
    margin-right: 22px;
}

.watch {
    width: 7px;
    height: 7px;
    color: #b4b4b4;
    margin-left: 5px;
}

.fx-label {
    width: 63px;
    color: #7c7c7c;
}

.fx-val {
    color: #7c7c7c;
}

.fx-val.blue {
    color: #3f95cf;
}

.swatches {
    display: flex;
    gap: 1.500px;
}

.swatch-black {
    width: 11px;
    height: 7px;
    background-color: #000;
    border: 1px solid #aaa;
}

.swatch-drop {
    width: 11px;
    height: 7px;
}

.dial-wrap {
    height: 20.500px;
    padding: 2px 0 0 90px;
}

.dial {
    width: 18px;
    height: 18px;
}

/* composition */
.comp-tabs {
    gap: 5px;
    padding-left: 6px;
}

.comp-sub {
    height: 14px;
    display: flex;
    align-items: center;
    padding-left: 10px;
    background-color: #282828;
}

.pill {
    display: flex;
    align-items: center;
    justify-content: space-between;
    width: 36px;
    height: 9px;
    padding: 0 3px 0 5px;
    background-color: #1a1a1a;
    margin-right: 4px;
}

.pill-arrow {
    font-size: 6px;
}

.renderer {
    margin-left: auto;
    color: #666;
    margin-right: 3px;
}

.renderer-box {
    width: 38px;
    padding: 2px 0 2px 5px;
    background-color: #2e2e2e;
    color: #6f6f6f;
    margin-right: 5px;
}

.viewer {
    height: 257px;
    background-color: #000;
    position: relative;
    overflow: hidden;
}

.viewer-label {
    padding: 4px 0 0 3px;
    color: #ddd;
    font-family: "Liberation Sans", sans-serif;
    font-weight: 700;
    font-size: 5.500px;
}

.title-art {
    position: absolute;
    left: 0;
    top: 0;
    width: 100%;
    color: #fff;
    font-family: "Inter", "Liberation Sans", sans-serif;
    font-weight: 900;
    font-size: 83px;
    line-height: 64px;
}

.line-1,
.line-2 {
    position: absolute;
    transform-origin: 0 100%;
    -webkit-text-stroke: 2px #fff;
}

.line-1 {
    left: 87px;
    top: 62px;
    transform: skewX(-14deg) scaleX(1.340);
}

.line-2 {
    left: 66px;
    top: 129px;
    transform: skewX(-14deg) scaleX(1.410);
}

.overlay {
    position: absolute;
    left: 0;
    top: 0;
    width: 595px;
    height: 257px;
}

.viewer-bar {
    height: 11px;
    display: flex;
    align-items: center;
    gap: 5px;
    padding-left: 3px;
    color: #777;
    background-color: #222;
}

.vb-zoom {
    margin-left: 1px;
    width: 20px;
}

.vb-time {
    margin-left: 2px;
    width: 29px;
    color: #5e5e5e;
}

.vb-full {
    margin-left: 2px;
    width: 28px;
}

.vb-cam {
    margin-left: 2px;
    width: 38px;
}

.vb-view {
    margin-left: 1px;
    width: 21px;
}

/* right column */
.side-top {
    display: flex;
    flex-direction: column;
    gap: 1px;
    min-height: 0;
}

.character {
    height: 159px;
    padding: 0 3px;
}

.side-tabs {
    height: 13px;
    display: flex;
    align-items: center;
    padding-left: 3px;
}

.underlined {
    display: inline-flex;
    align-items: center;
    gap: 4px;
    height: 12px;
    color: #a8a8a8;
    border-bottom: 1.500px solid #9a9a9a;
}

.para {
    margin-left: 13px;
}

.side-tabs .more {
    margin-left: auto;
    margin-right: 2px;
}

.font-block {
    display: flex;
    align-items: flex-start;
    padding-top: 5px;
    height: 29px;
}

.font-selects {
    width: 62px;
    display: flex;
    flex-direction: column;
    gap: 3px;
}

.select {
    height: 8.500px;
    display: flex;
    align-items: center;
    justify-content: space-between;
    padding: 0 2px 0 3px;
    background-color: #1b1b1b;
    color: #9a9a9a;
    width: 60px;
}

.small-swatches {
    width: 15px;
    display: flex;
    flex-direction: column;
    align-items: center;
    gap: 4px;
}

.bw-swatch {
    width: 10px;
    height: 8px;
    background: linear-gradient(#111 50%, #fff 50%);
    border: 1px solid #999;
}

.color-swatch {
    width: 21px;
    height: 20px;
    margin-top: -1px;
}

.char-grid {
    display: grid;
    grid-template-columns: 54px 1fr;
    row-gap: 1px;
    padding-top: 3px;
}

.cg {
    display: flex;
    align-items: center;
    gap: 3px;
    height: 9.500px;
    color: #666;
}

.cg .tw-tri {
    margin-left: 5px;
}

.stroke-row {
    margin-top: 3px;
    height: 15px;
    display: flex;
    align-items: center;
    gap: 3px;
    border-top: 1px solid #1d1d1d;
    border-bottom: 1px solid #1d1d1d;
    color: #555;
}

.stroke-row .tw-tri {
    margin-left: 9px;
}

.stroke-select {
    width: 54px;
    height: 7px;
    margin-left: 4px;
    background-color: #1e1e1e;
}

.scale-grid {
    padding-top: 4px;
}

.type-styles {
    display: flex;
    align-items: center;
    padding: 8px 0 0 14px;
    color: #bbb;
    font-family: "Liberation Serif", serif;
    font-size: 7.500px;
    font-weight: 700;
}

.type-styles span {
    width: 14px;
    height: 9px;
    display: flex;
    align-items: center;
    justify-content: center;
}

.type-styles .on {
    background-color: #181818;
    color: #3f95cf;
}

.type-styles small {
    font-size: 5px;
}

.type-styles sup,
.type-styles sub {
    font-size: 4px;
}

.char-checks {
    display: grid;
    grid-template-columns: 50px 1fr;
    padding: 6px 0 0 2px;
    color: #666;
}

.char-checks span {
    display: flex;
    align-items: center;
    gap: 2px;
}

.char-checks .check {
    width: 6px;
    height: 6px;
}

.align {
    flex: 1;
    padding: 0 3px;
}

.align-title {
    height: 17px;
    padding-left: 3px;
    display: flex;
    align-items: center;
    gap: 3px;
    color: #999;
}

.align-to {
    display: flex;
    align-items: center;
    justify-content: space-between;
    height: 9px;
    color: #7a7a7a;
}

.align-select {
    width: 52px;
    display: flex;
    justify-content: space-between;
    color: #8a8a8a;
    margin-right: 1px;
}

.align-icons {
    display: flex;
    justify-content: space-between;
    padding: 3px 0 0 1px;
    width: 98px;
    color: #ccc;
}

.align-dist {
    padding-top: 4px;
    color: #5a5a5a;
}

.faint .ic {
    color: #3e3e3e;
}

/* timeline */
.timeline {
    grid-column: 1 / 3;
    display: flex;
    flex-direction: column;
    overflow: hidden;
}

.tl-tabs {
    height: 14px;
    display: flex;
    align-items: center;
    padding-left: 6px;
    flex: none;
}

.chip-second {
    margin: 0 6px 0 19px;
}

.tl-body {
    flex: 1;
    display: flex;
    background-color: #1f1f1f;
    min-height: 0;
}

.tl-left {
    width: 299px;
    flex: none;
}

.tl-controls {
    height: 20px;
    display: flex;
    align-items: center;
}

.tl-time {
    width: 56px;
    padding-left: 7px;
}

.timecode {
    margin-left: 2px;
    color: #3f9ad8;
    font-size: 7.800px;
    font-weight: 600;
    margin-bottom: 2px;
}

.fps {
    color: #2f6f9e;
    font-size: 5px;
}

.tl-search {
    width: 136px;
    height: 8px;
    margin-top: -6px;
    padding: 1px 3px;
    background-color: #181818;
}

.tl-tools {
    display: flex;
    gap: 7px;
    padding-left: 9px;
    margin-top: -6px;
}

.layer-row {
    height: 8.600px;
    display: grid;
    grid-template-columns: 5px 27px 9px 6px 19px 91px 15px 10px 26px 16px 13px 44px;
    align-items: center;
    padding-left: 4px;
    border-bottom: 1px solid #181818;
    color: #8f8f8f;
    width: 299px;
}

.layer-row .ic-mini {
    width: 5.500px;
    height: 5.500px;
}

.layer-head {
    grid-template-columns: 5px 27px 9px 6px 19px 91px 8px 62px 46px;
    background-color: #262626;
}

.solo-head {
    display: flex;
    gap: 2px;
    padding-left: 2px;
}

.sw-head {
    display: flex;
    gap: 2.300px;
}

.sw-head em {
    font-size: 5.500px;
    font-family: "Liberation Serif", serif;
}

.num {
    padding-left: 5px;
}

.name {
    display: flex;
    align-items: center;
    gap: 4px;
    height: 7.500px;
}

.name.dim {
    padding-left: 2px;
}

.dim,
.parent {
    color: #5c5c5c;
}

.cells {
    height: 6px;
    margin: 0 6px 0 4px;
    background-color: #191919;
}

.sw {
    display: flex;
    align-items: center;
}

.sw-3d {
    padding-left: 3px;
}

.fx-sw em {
    font-family: "Liberation Serif", serif;
    font-size: 6px;
}

.none {
    display: flex;
    align-items: center;
    justify-content: space-between;
    height: 7px;
    padding: 0 3px;
    background-color: #191919;
    width: 44px;
}

.selected {
    background-color: #333;
}

.name-edit {
    border: 1px solid #9a9a9a;
    width: 88px;
}

.tl-right {
    flex: 1;
    position: relative;
    background-color: #2b2b2b;
    overflow: hidden;
}

.nav-bar {
    height: 3px;
    margin: 4px 10px 0 0;
    background-color: #777;
    border-left: 3px solid #3ba8ee;
    border-right: 3px solid #3ba8ee;
}

.ruler {
    height: 12px;
    display: flex;
    background-color: #232323;
    margin-top: 1px;
    padding-top: 2px;
    color: #777;
}

.ruler span {
    width: 45px;
    flex: none;
}

.ruler span:first-child {
    width: 43px;
    padding-left: 3px;
}

.work-area {
    height: 8px;
    margin-right: 13px;
    background-color: #6a6a6a;
    border-bottom: 1px solid #22a83a;
    box-sizing: content-box;
}

.tracks {
    margin-right: 13px;
}

.track {
    height: 8.800px;
    border-bottom: 1px solid #3a2a2a;
}

.track-pink {
    background-color: #a2516d;
}

.track-red {
    background-color: #a33a42;
}

.track-tan {
    background-color: #9a7a42;
}

.track-hot {
    background-color: #ec2d38;
}

.playhead {
    position: absolute;
    left: 0;
    top: 13px;
    bottom: 0;
    width: 1px;
    background-color: #3a8fc7;
}

.head-cap {
    position: absolute;
    left: -3px;
    top: 10px;
    width: 7px;
    height: 7px;
}

.side-marks {
    position: absolute;
    right: 1px;
    top: 20px;
    display: flex;
    flex-direction: column;
    gap: 2px;
}

.tl-foot {
    height: 9px;
    flex: none;
    display: flex;
    align-items: center;
    border-top: 1px solid #111;
    background-color: #1f1f1f;
    color: #6a6a6a;
}

.foot-icons {
    display: flex;
    gap: 3px;
    padding-left: 5px;
    width: 162px;
}

.toggle {
    width: 136px;
}

.foot-zoom {
    display: flex;
    align-items: center;
    gap: 4px;
}

.zoom-min {
    width: 4px;
    height: 1px;
    background-color: #aaa;
}

.zoom-knob {
    width: 5px;
    height: 5px;
    border-radius: 50%;
    border: 1px solid #aaa;
}

.zoom-line {
    width: 18px;
    height: 1px;
    background-color: #555;
}

/* effects and presets */
.presets {
    grid-column: 3;
    display: flex;
    flex-direction: column;
    padding: 0 3px;
    color: #7a7a7a;
}

.preset-title {
    height: 15px;
    display: flex;
    align-items: center;
    gap: 6px;
    padding-left: 3px;
    font-size: 5.800px;
}

.preset-search {
    height: 9px;
    display: flex;
    align-items: center;
    gap: 3px;
    padding: 0 2px 0 3px;
    background-color: #161616;
    color: #999;
}

.preset-search .close {
    margin-left: auto;
}

.preset-folder {
    height: 10px;
    display: flex;
    align-items: center;
    gap: 1px;
    padding: 2px 0 0 3px;
}

.preset-item {
    height: 8px;
    display: flex;
    align-items: center;
    gap: 3px;
    margin-left: 11px;
    padding-left: 2px;
    background-color: #2c2c2c;
    width: 81px;
}

.preset-hit {
    background-color: #a2a2a2;
    color: #333;
    padding: 1.500px 1.500px;
    margin-left: 1px;
}

.preset-foot {
    margin-top: auto;
    height: 9px;
    display: flex;
    justify-content: flex-end;
    align-items: center;
    border-top: 1px solid #111;
    margin-left: -3px;
    margin-right: -3px;
    padding-right: 10px;
}

.subtitle {
    position: absolute;
    left: 186px;
    top: 424px;
    color: #fff;
    font-family: "Noto Sans CJK SC", sans-serif;
    font-size: 24.800px;
    line-height: 30px;
    letter-spacing: 0.1px;
    white-space: pre;
    text-shadow: 0 0 2px #2a2a3a, 1px 1px 1px #2a2a3a;
}
```
